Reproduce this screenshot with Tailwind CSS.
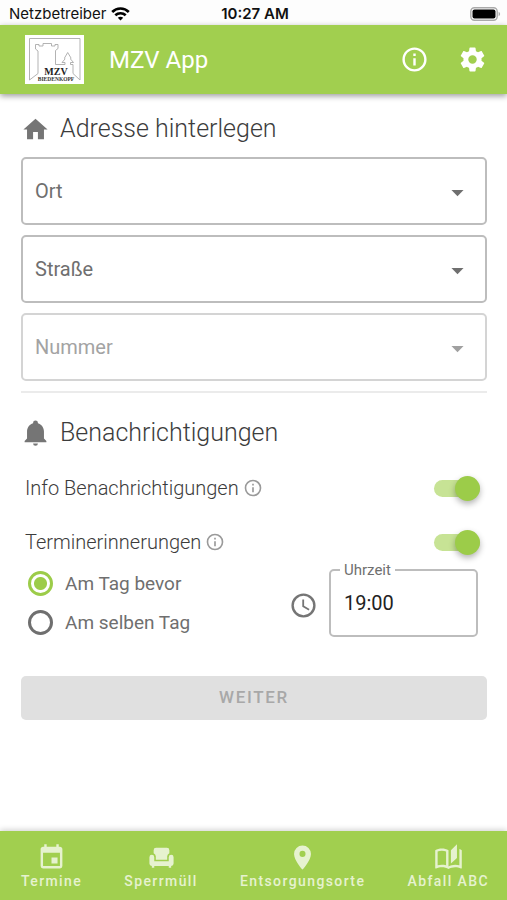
<!DOCTYPE html>
<html lang="de">

<head>
    <meta charset="UTF-8">
    <meta name="viewport" content="width=device-width, initial-scale=1.0">
    <title>MZV App</title>
    <script src="https://cdn.jsdelivr.net/npm/@tailwindcss/browser@4"></script>
</head>

<body class="min-h-screen flex flex-col bg-white font-[Roboto,sans-serif] text-[#3c3c3c]">
    <!-- Status bar -->
    <div class="h-[25px] grid grid-cols-3 items-center pl-[9px] pr-[6px] pt-[2px] font-[Inter,sans-serif] text-[15px] leading-5 text-[#111] bg-[#fdfdfd]">
        <div class="flex items-center gap-[5px]">
            <span>Netzbetreiber</span>
            <svg class="w-[19px] h-[14px]" viewBox="0 0 19 14" fill="none" stroke="#000" stroke-width="2.6">
                <path d="M1.2 5C5.8 .4 13.2 .4 17.8 5" />
                <path d="M4.3 8.3c2.9-2.8 7.5-2.8 10.4 0" />
                <path d="M9.5 13.6L6.8 10.8c1.500-1.4 3.9-1.4 5.4 0z" fill="#000" stroke="none" />
            </svg>
        </div>
        <span class="text-center font-semibold">10:27 AM</span>
        <svg class="justify-self-end w-[31px] h-[14px]" viewBox="0 0 31 14">
            <rect x=".8" y=".8" width="26.4" height="12.4" rx="3.6" fill="#fff" stroke="#aaa" stroke-width="1.4" />
            <rect x="2.5" y="2.5" width="23" height="9" rx="2" fill="#000" />
            <path d="M28.6 4.8c2 .8 2 3.6 0 4.4z" fill="#aaa" />
        </svg>
    </div>

    <header class="h-[69px] flex items-center pl-[25px] pr-5 bg-[#a1cf4f] text-white shadow-[0_2px_6px_rgba(0,0,0,0.4)]">
        <svg class="w-[59px] h-[49px]" viewBox="0 0 59 49" role="img" aria-label="MZV Biedenkopf">
            <rect width="59" height="49" fill="#fff" />
            <path d="M4.5 45V3.500H55V45L48 38.500V29.500H45.500V27.500H48.500L45.500 24L46 23L42.700 17.500L39.500 23L40 24L37 27.500H40V29.500H30.500V15.500L33 13.500V9.500H30V11H26.500V8.500H18V11H14V9.500H10.500V14L13 16V38.500Z" fill="none" stroke="#aaa" stroke-width=".9" />
            <text x="31" y="40" text-anchor="middle" font-family="Liberation Serif, serif" font-weight="700" font-size="10" fill="#222">MZV</text>
            <text x="31" y="46" text-anchor="middle" font-family="Liberation Serif, serif" font-weight="700" font-size="5.5" fill="#333">BIEDENKOPF</text>
        </svg>
        <h1 class="ml-[25px] text-[24px] font-normal">MZV App</h1>
        <div class="ml-auto flex gap-[29px]">
            <button type="button" aria-label="Info">
                <svg class="w-[29px] h-[29px]" viewBox="0 0 24 24" fill="currentColor">
                    <path d="M11,9H13V7H11M12,20C7.59,20 4,16.41 4,12C4,7.59 7.59,4 12,4C16.41,4 20,7.59 20,12C20,16.41 16.41,20 12,20M12,2A10,10 0 0,0 2,12A10,10 0 0,0 12,22A10,10 0 0,0 22,12A10,10 0 0,0 12,2M11,17H13V11H11V17Z" />
                </svg>
            </button>
            <button type="button" aria-label="Einstellungen">
                <svg class="w-[29px] h-[29px]" viewBox="0 0 24 24" fill="currentColor">
                    <path d="M12,15.500A3.500,3.500 0 0,1 8.500,12A3.500,3.500 0 0,1 12,8.500A3.500,3.500 0 0,1 15.500,12A3.500,3.500 0 0,1 12,15.500M19.430,12.970C19.470,12.650 19.500,12.330 19.500,12C19.500,11.670 19.470,11.340 19.430,11L21.540,9.370C21.730,9.220 21.780,8.950 21.660,8.730L19.660,5.270C19.540,5.050 19.270,4.960 19.050,5.050L16.560,6.050C16.040,5.660 15.500,5.320 14.870,5.070L14.500,2.420C14.460,2.180 14.250,2 14,2H10C9.750,2 9.540,2.180 9.500,2.420L9.130,5.070C8.500,5.320 7.960,5.660 7.440,6.050L4.950,5.050C4.730,4.960 4.460,5.050 4.340,5.270L2.340,8.730C2.210,8.950 2.270,9.220 2.460,9.370L4.570,11C4.530,11.340 4.500,11.670 4.500,12C4.500,12.330 4.530,12.650 4.570,12.970L2.460,14.630C2.270,14.780 2.210,15.050 2.340,15.270L4.340,18.730C4.460,18.950 4.730,19.030 4.950,18.950L7.440,17.940C7.960,18.340 8.500,18.680 9.130,18.930L9.500,21.580C9.540,21.820 9.750,22 10,22H14C14.250,22 14.460,21.820 14.500,21.580L14.870,18.930C15.500,18.670 16.040,18.340 16.560,17.940L19.050,18.950C19.270,19.030 19.540,18.950 19.660,18.730L21.660,15.270C21.780,15.050 21.730,14.780 21.540,14.630L19.430,12.970Z" />
                </svg>
            </button>
        </div>
    </header>

    <main class="flex-1 pl-[21px] pr-5 pt-4">
        <h2 class="flex items-center gap-[10px] h-[37px] mb-[10px] pt-px text-[25px] font-light">
            <svg class="w-[29px] h-[29px] text-[#757575]" viewBox="0 0 24 24" fill="currentColor">
                <path d="M10,20V14H14V20H19V12H22L12,3L2,12H5V20H10Z" />
            </svg>
            Adresse hinterlegen
        </h2>

        <div class="flex flex-col gap-[10px]">
            <div class="relative">
                <select aria-label="Ort" class="appearance-none block w-full h-[68px] px-[12px] border-2 border-[#bdbdbd] rounded-[5px] bg-white text-[20px] text-[#6f6f6f]">
                    <option>Ort</option>
                </select>
                <svg class="absolute right-[15px] top-[21px] w-[29px] h-[29px] pointer-events-none text-[#6f6f6f]" viewBox="0 0 24 24" fill="currentColor">
                    <path d="M7,10L12,15L17,10H7Z" />
                </svg>
            </div>
            <div class="relative">
                <select aria-label="Straße" class="appearance-none block w-full h-[68px] px-[12px] border-2 border-[#bdbdbd] rounded-[5px] bg-white text-[20px] text-[#6f6f6f]">
                    <option>Straße</option>
                </select>
                <svg class="absolute right-[15px] top-[21px] w-[29px] h-[29px] pointer-events-none text-[#6f6f6f]" viewBox="0 0 24 24" fill="currentColor">
                    <path d="M7,10L12,15L17,10H7Z" />
                </svg>
            </div>
            <div class="relative">
                <select aria-label="Nummer" disabled class="appearance-none block w-full h-[68px] px-[12px] border-2 border-[#d4d4d4] rounded-[5px] bg-white text-[20px] text-[#a3a3a3] opacity-100">
                    <option>Nummer</option>
                </select>
                <svg class="absolute right-[15px] top-[21px] w-[29px] h-[29px] pointer-events-none text-[#a0a0a0]" viewBox="0 0 24 24" fill="currentColor">
                    <path d="M7,10L12,15L17,10H7Z" />
                </svg>
            </div>
        </div>

        <hr class="mt-[10px] border-t-2 border-[#ebebeb]">

        <h2 class="flex items-center gap-[10px] h-[37px] mt-[21px] text-[25px] font-light">
            <svg class="w-[29px] h-[29px] text-[#757575]" viewBox="0 0 24 24" fill="currentColor">
                <path d="M21,19V20H3V19L5,17V11C5,7.900 7.030,5.170 10,4.290C10,4.190 10,4.100 10,4A2,2 0 0,1 12,2A2,2 0 0,1 14,4C14,4.100 14,4.190 14,4.290C16.970,5.170 19,7.900 19,11V17L21,19M14,21A2,2 0 0,1 12,23A2,2 0 0,1 10,21" />
            </svg>
            Benachrichtigungen
        </h2>

        <div class="mt-[10px] pl-[4px] pr-[7px] text-[20px] font-light">
            <div class="flex items-center h-[54px]">
                <label for="info">Info Benachrichtigungen</label>
                <svg class="ml-[4px] w-5 h-5 text-[#9a9a9a]" viewBox="0 0 24 24" fill="currentColor">
                    <path d="M11,9H13V7H11M12,20C7.59,20 4,16.41 4,12C4,7.59 7.59,4 12,4C16.41,4 20,7.59 20,12C20,16.41 16.41,20 12,20M12,2A10,10 0 0,0 2,12A10,10 0 0,0 12,22A10,10 0 0,0 22,12A10,10 0 0,0 12,2M11,17H13V11H11V17Z" />
                </svg>
                <input id="info" type="checkbox" role="switch" checked
                    class="appearance-none relative ml-auto w-[46px] h-[17px] rounded-full bg-[#c7e395] before:absolute before:left-0 before:-top-1 before:w-[25px] before:h-[25px] before:rounded-full before:bg-white before:shadow-[0_3px_6px_rgba(0,0,0,0.3)] checked:before:left-[21px] checked:before:bg-[#9ccc49]">
            </div>
            <div class="flex items-center h-[54px]">
                <label for="termine">Terminerinnerungen</label>
                <svg class="ml-[4px] w-5 h-5 text-[#9a9a9a]" viewBox="0 0 24 24" fill="currentColor">
                    <path d="M11,9H13V7H11M12,20C7.59,20 4,16.41 4,12C4,7.59 7.59,4 12,4C16.41,4 20,7.59 20,12C20,16.41 16.41,20 12,20M12,2A10,10 0 0,0 2,12A10,10 0 0,0 12,22A10,10 0 0,0 22,12A10,10 0 0,0 12,2M11,17H13V11H11V17Z" />
                </svg>
                <input id="termine" type="checkbox" role="switch" checked
                    class="appearance-none relative ml-auto w-[46px] h-[17px] rounded-full bg-[#c7e395] before:absolute before:left-0 before:-top-1 before:w-[25px] before:h-[25px] before:rounded-full before:bg-white before:shadow-[0_3px_6px_rgba(0,0,0,0.3)] checked:before:left-[21px] checked:before:bg-[#9ccc49]">
            </div>
        </div>

        <div class="flex items-start pl-[7px] pr-[9px]">
            <div class="flex flex-col gap-[14px] pt-[2px] text-[19px] leading-[25px] text-[#6f6f6f]">
                <label class="flex items-center gap-3">
                    <input type="radio" name="tag" checked class="appearance-none w-[25px] h-[25px] rounded-full border-[3px] border-[#6f6f6f] checked:border-[#9ccc49] checked:bg-[radial-gradient(circle,#9ccc49_6px,transparent_7px)]">
                    Am Tag bevor
                </label>
                <label class="flex items-center gap-3">
                    <input type="radio" name="tag" class="appearance-none w-[25px] h-[25px] rounded-full border-[3px] border-[#6f6f6f]">
                    Am selben Tag
                </label>
            </div>
            <svg class="ml-auto mt-[22px] w-[29px] h-[29px] text-[#757575]" viewBox="0 0 24 24" fill="currentColor">
                <path d="M12,20A8,8 0 0,0 20,12A8,8 0 0,0 12,4A8,8 0 0,0 4,12A8,8 0 0,0 12,20M12,2A10,10 0 0,1 22,12A10,10 0 0,1 12,22C6.470,22 2,17.500 2,12A10,10 0 0,1 12,2M12.500,7V12.250L17,14.920L16.250,16.150L11,13V7H12.500Z" />
            </svg>
            <div class="relative ml-[11px] w-[149px]">
                <label for="uhrzeit" class="absolute left-[11px] -top-2 px-1 bg-white text-[15px] leading-[18px] text-[#6f6f6f]">Uhrzeit</label>
                <input id="uhrzeit" type="text" value="19:00" class="block w-full h-[68px] px-[13px] border-2 border-[#bdbdbd] rounded-[5px] text-[20px] text-[#222]">
            </div>
        </div>

        <button type="button" disabled class="block w-full h-11 mt-[39px] rounded-[5px] bg-[#e0e0e0] text-[17px] font-medium tracking-widest text-[#a8a8a8]">WEITER</button>
    </main>

    <nav class="h-[69px] flex justify-between pl-[21px] pr-[18px] pt-3 bg-[#a1cf4f] text-[14px] leading-[18px] font-medium tracking-widest text-[#e6f2cf] shadow-[0_-1px_6px_rgba(0,0,0,0.2)]">
        <a href="#" class="flex flex-col items-center">
            <svg class="w-[29px] h-[29px]" viewBox="0 0 24 24" fill="currentColor">
                <path d="M19,19H5V8H19M16,1V3H8V1H6V3H5C3.890,3 3,3.890 3,5V19A2,2 0 0,0 5,21H19A2,2 0 0,0 21,19V5C21,3.890 20.100,3 19,3H18V1M17,12H12V17H17V12Z" />
            </svg>
            Termine
        </a>
        <a href="#" class="flex flex-col items-center">
            <svg class="w-[29px] h-[29px]" viewBox="0 0 24 24" fill="currentColor">
                <path d="M7.500 4h9a2 2 0 0 1 2 2v2.500a3 3 0 0 0-1.800 2.500v2.800H7.300V11A3 3 0 0 0 5.500 8.500V6a2 2 0 0 1 2-2z" />
                <path d="M4 9.800a2 2 0 0 1 2 2v3.200h12v-3.200a2 2 0 1 1 4 0v5.200a2 2 0 0 1-2 2v1.500h-2V19H6v1.500H4V19a2 2 0 0 1-2-2v-5.200a2 2 0 0 1 2-2z" />
            </svg>
            Sperrmüll
        </a>
        <a href="#" class="flex flex-col items-center">
            <svg class="w-[29px] h-[29px]" viewBox="0 0 24 24" fill="currentColor">
                <path d="M12,11.500A2.500,2.500 0 0,1 9.500,9A2.500,2.500 0 0,1 12,6.500A2.500,2.500 0 0,1 14.500,9A2.500,2.500 0 0,1 12,11.500M12,2A7,7 0 0,0 5,9C5,14.250 12,22 12,22C12,22 19,14.250 19,9A7,7 0 0,0 12,2Z" />
            </svg>
            Entsorgungsorte
        </a>
        <a href="#" class="flex flex-col items-center">
            <svg class="w-[29px] h-[29px]" viewBox="0 0 24 24" fill="currentColor">
                <path d="M19 1L14 6V17L19 12.500V1M21 5V18.500C19.900 18.150 18.700 18 17.500 18C15.800 18 13.350 18.650 12 19.500V6C10.550 4.900 8.450 4.500 6.500 4.500C4.550 4.500 2.450 4.900 1 6V20.650C1 20.900 1.250 21.150 1.500 21.150C1.600 21.150 1.650 21.100 1.750 21.100C3.100 20.450 5.050 20 6.500 20C8.450 20 10.550 20.400 12 21.500C13.350 20.650 15.800 20 17.500 20C19.150 20 20.850 20.300 22.250 21.050C22.350 21.100 22.400 21.100 22.500 21.100C22.750 21.100 23 20.850 23 20.600V6C22.400 5.550 21.750 5.250 21 5M10 18.410C8.750 18.090 7.500 18 6.500 18C5.440 18 4.180 18.190 3 18.500V7.130C3.910 6.730 5.140 6.500 6.500 6.500C7.860 6.500 9.090 6.730 10 7.130V18.410Z" />
            </svg>
            Abfall ABC
        </a>
    </nav>
</body>

</html>
